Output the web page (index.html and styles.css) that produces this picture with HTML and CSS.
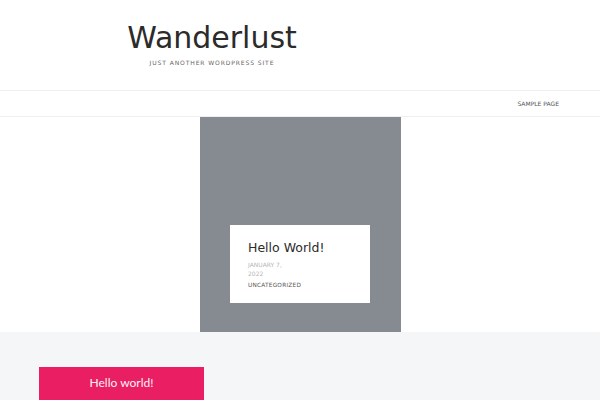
FILE: index.html
```html
<!DOCTYPE html>
<html lang="en">
<head>
<meta charset="utf-8">
<title>Wanderlust</title>
<link rel="stylesheet" href="styles.css">
</head>
<body>
<header class="site-header">
  <div class="branding">
    <h1 class="site-title">Wanderlust</h1>
    <p class="site-desc">Just another WordPress site</p>
  </div>
</header>
<nav class="main-nav">
  <a class="nav-link" href="#">Sample Page</a>
</nav>
<section class="hero">
  <div class="hero-box">
    <article class="post-card">
      <h2 class="post-title">Hello World!</h2>
      <div class="post-date">January 7, 2022</div>
      <div class="post-cat">Uncategorized</div>
    </article>
  </div>
</section>
<section class="lower">
  <div class="pink-card">Hello world!</div>
</section>
</body>
</html>
```
FILE: styles.css
```css
html, body {
  margin: 0;
  padding: 0;
  background: #ffffff;
  font-family: "DejaVu Sans", Verdana, sans-serif;
}

.site-header {
  padding: 20px 0 23px;
  border-bottom: 1px solid #efefef;
}

.branding {
  width: 424px;
  text-align: center;
}

.site-title {
  margin: 0;
  font-size: 30px;
  line-height: 36px;
  font-weight: normal;
  color: #2b2b2b;
}

.site-desc {
  margin: 3px 0 0;
  font-size: 6px;
  line-height: 8px;
  letter-spacing: 0.9px;
  text-transform: uppercase;
  color: #666;
}

.main-nav {
  display: flex;
  justify-content: flex-end;
  height: 25px;
  padding-right: 41px;
  border-bottom: 1px solid #efefef;
}

.nav-link {
  font-size: 6px;
  line-height: 25px;
  text-transform: uppercase;
  color: #555;
  text-decoration: none;
}

.hero {
  display: flex;
  justify-content: center;
}

.hero-box {
  width: 201px;
  height: 215px;
  box-sizing: border-box;
  padding-bottom: 29px;
  background: #868b91;
  display: flex;
  justify-content: center;
  align-items: flex-end;
}

.post-card {
  width: 140px;
  box-sizing: border-box;
  padding: 15px 18px 13px;
  background: #ffffff;
}

.post-title {
  margin: 0;
  font-size: 12.5px;
  line-height: 15px;
  font-weight: normal;
  color: #2b2b2b;
}

.post-date {
  width: 44px;
  margin-top: 5px;
  font-size: 6px;
  line-height: 9px;
  text-transform: uppercase;
  color: #b5b5b5;
}

.post-cat {
  margin-top: 3px;
  font-size: 5.75px;
  line-height: 9px;
  letter-spacing: 0.25px;
  text-transform: uppercase;
  color: #555;
}

.lower {
  background: #f5f6f8;
  padding: 35px 0 0 39px;
  height: 68px;
  box-sizing: border-box;
  overflow: hidden;
}

.pink-card {
  width: 165px;
  padding: 9px 0 20px;
  background: #e91e63;
  color: #fdf0f4;
  text-align: center;
  font-family: Lato, "Open Sans", sans-serif;
  font-size: 12px;
  line-height: 14px;
}
```
